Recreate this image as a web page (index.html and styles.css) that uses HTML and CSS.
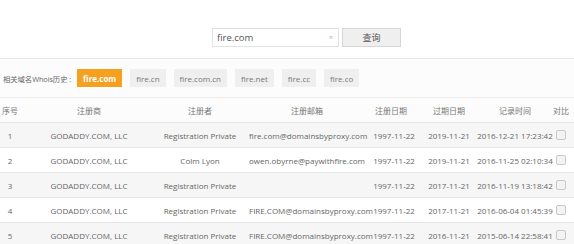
FILE: index.html
```html
<!DOCTYPE html>
<html lang="zh-CN">
<head>
<meta charset="utf-8">
<title>Whois</title>
<link rel="stylesheet" href="styles.css">
</head>
<body>
<div class="search">
  <div class="input"><span class="val">fire.com</span><span class="clear">×</span></div>
  <button class="btn">查询</button>
</div>
<div class="tags">
  <span class="label">相关域名Whois历史 :</span>
  <span class="tag active">fire.com</span>
  <span class="tag">fire.cn</span>
  <span class="tag">fire.com.cn</span>
  <span class="tag">fire.net</span>
  <span class="tag">fire.cc</span>
  <span class="tag">fire.co</span>
</div>
<div class="table">
  <div class="row head">
    <div class="c">序号</div><div class="c">注册商</div><div class="c">注册者</div><div class="c">注册邮箱</div><div class="c hd">注册日期</div><div class="c">过期日期</div><div class="c">记录时间</div><div class="c">对比</div>
  </div>
  <div class="row odd">
    <div class="c">1</div><div class="c">GODADDY.COM, LLC</div><div class="c">Registration Private</div><div class="c mail">fire.com@domainsbyproxy.com</div><div class="c">1997-11-22</div><div class="c">2019-11-21</div><div class="c">2016-12-21 17:23:42</div><div class="c"><span class="chk"></span></div>
  </div>
  <div class="row">
    <div class="c">2</div><div class="c">GODADDY.COM, LLC</div><div class="c">Colm Lyon</div><div class="c mail">owen.obyrne@paywithfire.com</div><div class="c">1997-11-22</div><div class="c">2019-11-21</div><div class="c">2016-11-25 02:10:34</div><div class="c"><span class="chk"></span></div>
  </div>
  <div class="row odd">
    <div class="c">3</div><div class="c">GODADDY.COM, LLC</div><div class="c">Registration Private</div><div class="c mail"></div><div class="c">1997-11-22</div><div class="c">2017-11-21</div><div class="c">2016-11-19 13:18:42</div><div class="c"><span class="chk"></span></div>
  </div>
  <div class="row">
    <div class="c">4</div><div class="c">GODADDY.COM, LLC</div><div class="c">Registration Private</div><div class="c mail">FIRE.COM@domainsbyproxy.com</div><div class="c">1997-11-22</div><div class="c">2017-11-21</div><div class="c">2016-06-04 01:45:39</div><div class="c"><span class="chk"></span></div>
  </div>
  <div class="row odd">
    <div class="c">5</div><div class="c">GODADDY.COM, LLC</div><div class="c">Registration Private</div><div class="c mail">FIRE.COM@domainsbyproxy.com</div><div class="c">1997-11-22</div><div class="c">2016-11-21</div><div class="c">2015-06-14 22:58:41</div><div class="c"><span class="chk"></span></div>
  </div>
</div>
</body>
</html>
```
FILE: styles.css
```css
html, body {
  margin: 0;
  padding: 0;
  background: #fff;
  font-family: "Open Sans", "Noto Sans CJK SC", sans-serif;
  color: #555;
  width: 574px;
  height: 244px;
  overflow: hidden;
}
.search {
  display: flex;
  gap: 3px;
  padding: 28px 0 0 212px;
  border-bottom: 1px solid #e8e8e8;
  box-sizing: border-box;
  height: 59px;
}
.input {
  width: 127px;
  height: 19px;
  box-sizing: border-box;
  border: 1px solid #e2e2e2;
  display: flex;
  align-items: center;
  justify-content: space-between;
  padding: 0 5px 0 4px;
  font-size: 9.5px;
  color: #555;
}
.clear {
  font-size: 7px;
  color: #d9a08a;
}
.btn {
  width: 59px;
  height: 19px;
  margin: 0;
  padding: 0;
  border: 1px solid #d6d6d6;
  background: #efefef;
  font-family: "Noto Sans CJK SC", sans-serif;
  font-size: 9px;
  color: #555;
}
.tags {
  display: flex;
  align-items: center;
  height: 38px;
  padding-left: 3px;
  gap: 8px;
  background: #fcfcfc;
}
.label {
  font-size: 7.4px;
  color: #666;
  margin-right: -2px;
  letter-spacing: -0.1px;
}
.tag {
  height: 18px;
  display: flex;
  align-items: center;
  padding: 0 6px;
  background: #efefef;
  font-size: 8px;
  color: #777;
}
.tag.active {
  background: #f5a01f;
  color: #fff;
  font-weight: bold;
  padding: 0 6px;
}
.table {
  border-top: 1px solid #ececec;
  background: #fcfcfc;
}
.row {
  display: grid;
  grid-template-columns: 20px 138px 84px 130px 44px 66px 66px 26px;
  height: 25px;
  border-bottom: 1px solid #e6e6e6;
  box-sizing: border-box;
  font-size: 8px;
  color: #666;
  background: #fff;
}
.row.odd {
  background: #f6f6f6;
}
.row.head {
  color: #777;
  background: #fcfcfc;
}
.c {
  display: flex;
  align-items: center;
  justify-content: center;
  white-space: nowrap;
}
.c.hd {
  padding-right: 6px;
}
.c.mail {
  justify-content: flex-start;
  padding-left: 7px;
}
.row.head .c.mail {
  justify-content: center;
  padding-left: 0;
}
.chk {
  width: 8px;
  height: 8px;
  border: 1px solid #c8c8c8;
  border-radius: 2px;
  background: #f3f3f3;
}
```
